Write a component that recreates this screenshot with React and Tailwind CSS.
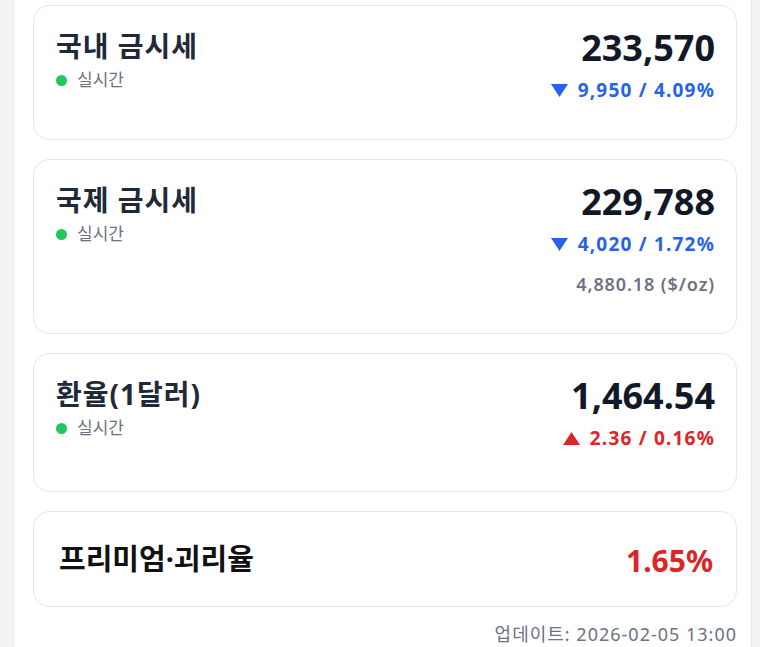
import React from "react";

const font = { fontFamily: '"Noto Sans", "Noto Sans CJK KR", sans-serif' };

function Live() {
  return (
    <div className="flex items-center gap-[10px] mt-[5px]">
      <span className="w-[11px] h-[11px] rounded-full bg-[#22c55e]" />
      <span className="text-[17px] leading-[22px] text-[#6b7280]">실시간</span>
    </div>
  );
}

function Down() {
  return (
    <svg width="17" height="13" viewBox="0 0 17 13" className="mr-[10px]">
      <polygon points="0,0 17,0 8.5,13" fill="#2563eb" />
    </svg>
  );
}

function Up() {
  return (
    <svg width="17" height="13" viewBox="0 0 17 13" className="mr-[10px]">
      <polygon points="8.5,0 17,13 0,13" fill="#dc2626" />
    </svg>
  );
}

function Card({ title, value, change, dir, extra, pb }) {
  return (
    <div className={`rounded-[16px] border border-[#e5e7eb] bg-white pl-[22px] pr-[21px] pt-[22px] ${pb}`}>
      <div className="flex justify-between items-start">
        <div>
          <div className="text-[28px] leading-[36px] font-bold tracking-[1px] text-[#1f2937]">{title}</div>
          <Live />
        </div>
        <div className="flex flex-col items-end">
          <div className="text-[36px] leading-[40px] font-bold text-[#111827]">{value}</div>
          <div className={`flex items-center mt-[8px] text-[19px] leading-[28px] font-bold tracking-[1.2px] ${dir === "down" ? "text-[#2563eb]" : "text-[#dc2626]"}`}>
            {dir === "down" ? <Down /> : <Up />}
            {change}
          </div>
          {extra && (
            <div className="mt-[14px] text-[18px] leading-[24px] font-semibold tracking-[0.9px] text-[#6b7280]">{extra}</div>
          )}
        </div>
      </div>
    </div>
  );
}

export default function App() {
  return (
    <div className="min-h-[647px] bg-[#f3f3f3]" style={font}>
      <div className="ml-[15px] w-[737px] min-h-[647px] bg-white border-r border-[#e5e7eb] pl-[18px] pr-[14px] pt-[5px]">
        <div className="flex flex-col gap-[19px]">
          <Card title="국내 금시세" value="233,570" change="9,950 / 4.09%" dir="down" pb="pb-[35px]" />
          <Card title="국제 금시세" value="229,788" change="4,020 / 1.72%" dir="down" extra="4,880.18 ($/oz)" pb="pb-[37px]" />
          <Card title="환율(1달러)" value="1,464.54" change="2.36 / 0.16%" dir="up" pb="pb-[39px]" />
          <div className="rounded-[16px] border border-[#e5e7eb] bg-white pl-[25px] pr-[23px] py-[25px] flex justify-between items-center">
            <div className="text-[29px] leading-[40px] font-bold text-[#111111]">프리미엄·괴리율</div>
            <div className="text-[30px] leading-[40px] font-bold text-[#dc2626] mt-[4px]">1.65%</div>
          </div>
        </div>
        <div className="mt-[15px] text-right text-[18px] leading-[24px] tracking-[1px] text-[#6b7280]">업데이트: 2026-02-05 13:00</div>
      </div>
    </div>
  );
}
